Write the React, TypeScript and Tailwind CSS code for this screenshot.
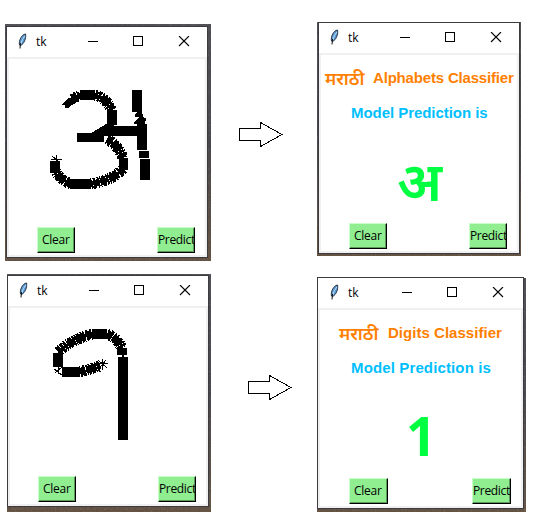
import React from "react";

function Feather() {
  return (
    <svg className="block h-4 w-3" viewBox="0 0 12 16">
      <path d="M2.5 12C1.5 8 4.5 1.5 8.5 1C9.5 5 7 11 3.5 12.5Z" fill="#5b9bd5" stroke="#17202b" strokeWidth=".9" />
      <path d="M8 3Q5 6 3.8 11" fill="none" stroke="#bfe0fb" />
      <path d="M3.5 10L3 15.5" stroke="#111" strokeWidth="1" />
    </svg>
  );
}

function TitleBar({ lead, gap }: { lead: string; gap: string }) {
  return (
    <div className="flex h-[30px] shrink-0 items-start bg-white pt-[6px]">
      <div className={lead}><Feather /></div>
      <div className="ml-[7px] w-[11px] pt-[1px] font-['Open_Sans','Noto_Sans',sans-serif] text-[12px] leading-4 text-black">tk</div>
      <svg className={gap + " block h-[11px] shrink-0"} viewBox="0 0 102 11" shapeRendering="crispEdges" fill="none" stroke="#000">
        <path d="M0 5.5H10" />
        <path d="M45.5 .5H54.5V9.5H45.5Z" />
        <path d="M91 0L101 10M101 0L91 10" shapeRendering="auto" strokeWidth="1.1" />
      </svg>
    </div>
  );
}

function TkButton({ label, size, pad }: { label: string; size: string; pad: string }) {
  return (
    <button className={size + " h-[26px] overflow-hidden border-t border-l border-r border-b border-t-[#c8ffc8] border-l-[#c8ffc8] border-r-black border-b-black bg-[#90ee90] text-left font-['Open_Sans','Noto_Sans',sans-serif] text-[12px] text-black shadow-[inset_-1px_-1px_0_#5c9a5c]"}>
      <span className={pad + " block w-full overflow-hidden whitespace-nowrap leading-[22px]"}>{label}</span>
    </button>
  );
}

type WindowProps = {
  frame: string;
  body: string;
  lead: string;
  gap: string;
  buttonPad: string;
  size: string;
  children: React.ReactNode;
};

function TkWindow({ frame, body, lead, gap, buttonPad, size, children }: WindowProps) {
  return (
    <section className={frame + " relative shrink-0 bg-linear-to-b from-[#4d4b50] via-[#454348] to-[#62503f]"}>
      <svg className="absolute inset-0 h-full w-full opacity-35">
        <filter id="grain"><feTurbulence baseFrequency=".7" numOctaves="2" /><feColorMatrix type="saturate" values="0" /></filter>
        <rect width="100%" height="100%" filter="url(#grain)" />
      </svg>
      <div className={body + " relative flex flex-col bg-white shadow-[0_0_0_1px_#3c3c40]"}>
        <TitleBar lead={lead} gap={gap} />
        <div className="flex min-h-0 flex-1 flex-col border-2 border-[#f0f0f0] bg-white">
          <div className="min-h-0 flex-1">{children}</div>
          <div className={buttonPad + " mb-[2px] flex justify-between"}>
            <TkButton label="Clear" size={size} pad="pl-[4px] tracking-[-0.25px]" />
            <TkButton label="Predict" size={size} pad="pl-0 tracking-[-0.35px]" />
          </div>
        </div>
      </div>
    </section>
  );
}

function Rough({ d }: { d: string }) {
  return (
    <g fill="none" stroke="#000">
      <path d={d} strokeWidth="3" strokeDasharray="5 1" />
      <path d={d} strokeWidth="11" strokeDasharray="1.6 1.5 2.8 1.2 1 1.1" />
      <path d={d} strokeWidth="8" strokeDasharray="3 1 1.8 1" />
    </g>
  );
}

function LetterDrawing() {
  return (
    <svg className="block h-[168px] w-[196px]" viewBox="9 59 196 168" shapeRendering="crispEdges">
      <path d="M62 104L69 98H73L80 93V99L68 108H65V105H62Z" />
      <path d="M80 90H95V100H80ZM107 110H117V125H107ZM77 133H91L103 126H147V136H104V142H77ZM132 90H142V112H132ZM137 135H147V150H137ZM139 151H149V158H139ZM140 159H150V180H140ZM119 158H128V170H119ZM70 179H91V189H70ZM50 161H60V173H50Z" />
      <Rough d="M72 99L80 95M95 95C102 97 107 101 112 110" />
      <Rough d="M112 124L107 131M107 139Q118 145 123 158" />
      <Rough d="M123 169Q113 180 91 184" />
      <Rough d="M71 184Q61 180 56 172" />
      <path d="M137 112H142L144 118H146L145 124H147V127H137V124H134V122L139 117H135V115Z" />
      <path d="M51 159.5H62M56.5 155V165M52 156L58 161" fill="none" stroke="#000" />
    </svg>
  );
}

function DigitDrawing() {
  return (
    <svg className="block h-[168px] w-[196px]" viewBox="10 308 196 168" shapeRendering="crispEdges">
      <path d="M92 329H107V339H92ZM117 348H127V355H117ZM122 355H124V357H128V440H118V357H122ZM53 353H63V367H53ZM62 367H80V377H62Z" />
      <Rough d="M107 334Q117 338 122 348" />
      <Rough d="M92 334Q71 340 58 352" />
      <Rough d="M80 372L100 366" />
      <path d="M54 369L62 375M55 373L62 367M58 366V374M96 363.5H108M102.5 359V370M98 360L107 368M106 360L98 370" fill="none" stroke="#000" />
    </svg>
  );
}

type ResultProps = {
  kind: string;
  value: string;
  titlePad: string;
  titleSpace: string;
  modelPad: string;
  modelSpace: string;
  valueStyle: string;
};

function Result({ kind, value, titlePad, titleSpace, modelPad, modelSpace, valueStyle }: ResultProps) {
  return (
    <div className="pt-[12px] font-['Liberation_Sans','Noto_Sans',sans-serif] font-bold whitespace-nowrap">
      <div className={titlePad + " flex h-[22px] items-center text-[15px] leading-[22px] text-[#ff8000]"}>
        <span className="w-[40px] font-['Noto_Sans',sans-serif] text-[17.8px] font-semibold">मराठी</span>
        <span className={"ml-[8px] " + titleSpace}>{kind} Classifier</span>
      </div>
      <div className={modelPad + " mt-[14px] text-[15px] leading-5 text-[#00bfff] " + modelSpace}>Model Prediction is</div>
      <div className={valueStyle + " text-[#00ff40]"}>{value}</div>
    </div>
  );
}

function Arrow({ place }: { place: string }) {
  return (
    <svg className={place + " block h-[26px] w-[45px] shrink-0"} viewBox="0 0 45 26" shapeRendering="crispEdges">
      <path d="M.5 6.5H21.5V.5L43 12.5L21.5 24.5V18.5H.5Z" fill="none" stroke="#000" />
    </svg>
  );
}

export default function App() {
  return (
    <main className="h-[526px] w-[553px] overflow-hidden bg-white pt-[22px]">
      <div className="flex h-[252px] items-start">
        <TkWindow frame="mt-[2px] ml-[5px] h-[237px] w-[206px] pt-[3px] pl-[2px]" body="h-[230px] w-[200px]" lead="ml-[10px]" gap="ml-[41px] mt-[3px] w-[102px]" buttonPad="pl-[28px] pr-[10px]" size="w-[38px]">
          <LetterDrawing />
        </TkWindow>
        <Arrow place="mt-[100px] ml-[28px]" />
        <TkWindow frame="ml-[33px] h-[234px] w-[204px] pt-[1px] pl-[2px]" body="h-[230px] w-[200px]" lead="ml-[10px]" gap="ml-[41px] mt-[3px] w-[102px]" buttonPad="pl-[28px] pr-[10px]" size="w-[38px]">
          <Result kind="Alphabets" value="अ" titlePad="pl-[4px]" titleSpace="tracking-[-0.18px]" modelPad="pl-[30px]" modelSpace="tracking-[-0.05px]" valueStyle="mt-[22px] pl-[76px] font-['Noto_Sans',sans-serif] font-semibold text-[55px] leading-[70px]" />
        </TkWindow>
      </div>
      <div className="flex items-start">
        <TkWindow frame="ml-[7px] h-[238px] w-[204px] pt-[2px] pl-[1px]" body="h-[230px] w-[200px]" lead="ml-[10px]" gap="ml-[41px] mt-[3px] w-[102px]" buttonPad="pl-[28px] pr-[10px]" size="w-[38px]">
          <DigitDrawing />
        </TkWindow>
        <Arrow place="mt-[101px] ml-[37px]" />
        <TkWindow frame="mt-[4px] ml-[24px] h-[234px] w-[209px] pl-[1px]" body="h-[230px] w-[205px]" lead="ml-[11px]" gap="ml-[42px] mt-[3px] w-[104px]" buttonPad="pl-[29px] pr-[10px]" size="w-[39px]">
          <Result kind="Digits" value="1" titlePad="pl-[19px]" titleSpace="tracking-[0.03px] pl-[1px]" modelPad="pl-[31px]" modelSpace="tracking-[0.13px]" valueStyle="mt-[23px] pl-[86px] font-['Noto_Sans',sans-serif] text-[53px] leading-[70px]" />
        </TkWindow>
      </div>
    </main>
  );
}
